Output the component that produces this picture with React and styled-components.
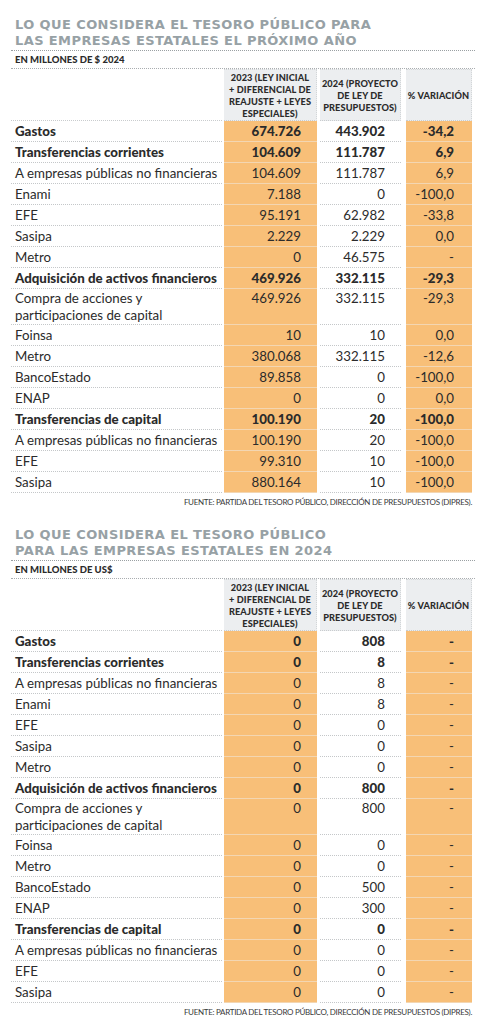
import React from "react";
import styled, { createGlobalStyle } from "styled-components";

const GlobalStyle = createGlobalStyle`
	body {
		margin: 0;
		background: #ffffff;
		font-family: Lato, "Open Sans", sans-serif;
		color: #2b2b2b;
	}
`;

const ORANGE = "#f8bf78";
const HEAD_GRAY = "#eceef0";
const RULE = "#c4c7c9";

const Page = styled.div`
	width: 493px;
	padding-left: 11px;
	box-sizing: border-box;
`;

const Section = styled.section`
	width: 464px;
	padding-top: ${props => props.$top}px;
`;

const Title = styled.h1`
	margin: 0;
	padding: 0 0 1px 4px;
	font-family: "DejaVu Sans", sans-serif;
	font-weight: bold;
	font-size: 13px;
	line-height: 16px;
	letter-spacing: 0.4px;
	color: #97a1a5;
	border-bottom: 1px dotted #9aa0a3;
`;

const Unit = styled.div`
	height: 17px;
	padding-left: 4px;
	font-size: 9.5px;
	font-weight: 900;
	line-height: 18px;
	border-bottom: 1px dotted #a9adb0;
`;

// label | 2023 | 2024 | variation
const Row = styled.div`
	display: grid;
	grid-template-columns: 211px 93px 82px 69px;
	column-gap: 2px;
	& > :nth-child(3) {
		margin-left: 1px;
	}
	& > :nth-child(4) {
		margin-left: 3px;
	}
`;

const HeadCell = styled.div`
	height: 52px;
	display: flex;
	align-items: center;
	justify-content: center;
	text-align: center;
	background: ${props => (props.$empty ? "transparent" : HEAD_GRAY)};
	border-top: ${props => (props.$empty ? "none" : "1px dotted #d3d6d8")};
	border-right: ${props => (props.$empty ? "none" : "1px dotted #d3d6d8")};
	border-bottom: 1px dotted #c9ccce;
	box-sizing: border-box;
	font-size: 9.2px;
	font-weight: 900;
	line-height: 12px;
	letter-spacing: 0.1px;
	white-space: nowrap;
	padding: 2px 0 0;
`;

const Cell = styled.div`
	height: ${props => (props.$double ? 34 : 20)}px;
	border-bottom: 1px ${props => (props.$fill ? "solid" : "dotted")}
		${props => (props.$fill ? "#f3d6b2" : RULE)};
	background: ${props => (props.$fill ? ORANGE : "transparent")};
	font-size: 13.3px;
	line-height: ${props => (props.$double ? 17 : 21)}px;
	padding-top: ${props => (props.$double ? 1 : 0)}px;
	font-weight: ${props => (props.$bold ? 900 : 400)};
	color: #2b2b2b;
	white-space: nowrap;
`;

const Label = styled(Cell)`
	padding-left: 4px;
`;

const Num = styled(Cell)`
	text-align: right;
	padding-right: ${props => props.$pad}px;
`;

const Source = styled.div`
	text-align: right;
	padding: 4px 3px 0 0;
	height: 14px;
	font-size: 8px;
	letter-spacing: -0.3px;
	color: #3a3a3a;
	text-transform: uppercase;
`;

const HEAD = [
	["2023 (LEY INICIAL", "+ DIFERENCIAL DE", "REAJUSTE + LEYES", "ESPECIALES)"],
	["2024 (PROYECTO", "DE LEY DE", "PRESUPUESTOS)"],
	["% VARIACIÓN"],
];

const T1 = [
	["Gastos", "674.726", "443.902", "-34,2", 1],
	["Transferencias corrientes", "104.609", "111.787", "6,9", 1],
	["A empresas públicas no financieras", "104.609", "111.787", "6,9"],
	["Enami", "7.188", "0", "-100,0"],
	["EFE", "95.191", "62.982", "-33,8"],
	["Sasipa", "2.229", "2.229", "0,0"],
	["Metro", "0", "46.575", "-"],
	["Adquisición de activos financieros", "469.926", "332.115", "-29,3", 1],
	[["Compra de acciones y", "participaciones de capital"], "469.926", "332.115", "-29,3", 0, 1],
	["Foinsa", "10", "10", "0,0"],
	["Metro", "380.068", "332.115", "-12,6"],
	["BancoEstado", "89.858", "0", "-100,0"],
	["ENAP", "0", "0", "0,0"],
	["Transferencias de capital", "100.190", "20", "-100,0", 1],
	["A empresas públicas no financieras", "100.190", "20", "-100,0"],
	["EFE", "99.310", "10", "-100,0"],
	["Sasipa", "880.164", "10", "-100,0"],
];

const T2 = [
	["Gastos", "0", "808", "-", 1],
	["Transferencias corrientes", "0", "8", "-", 1],
	["A empresas públicas no financieras", "0", "8", "-"],
	["Enami", "0", "8", "-"],
	["EFE", "0", "0", "-"],
	["Sasipa", "0", "0", "-"],
	["Metro", "0", "0", "-"],
	["Adquisición de activos financieros", "0", "800", "-", 1],
	[["Compra de acciones y", "participaciones de capital"], "0", "800", "-", 0, 1],
	["Foinsa", "0", "0", "-"],
	["Metro", "0", "0", "-"],
	["BancoEstado", "0", "500", "-"],
	["ENAP", "0", "300", "-"],
	["Transferencias de capital", "0", "0", "-", 1],
	["A empresas públicas no financieras", "0", "0", "-"],
	["EFE", "0", "0", "-"],
	["Sasipa", "0", "0", "-"],
];

const Lines = ({ items }) =>
	items.map((line, i) => (
		<React.Fragment key={i}>
			{i > 0 && <br />}
			{line}
		</React.Fragment>
	));

const Budget = ({ title, unit, rows, top }) => (
	<Section $top={top}>
		<Title>
			<Lines items={title} />
		</Title>
		<Unit>{unit}</Unit>
		<Row>
			<HeadCell $empty />
			{HEAD.map(h => (
				<HeadCell key={h[0]}>
					<div>
						<Lines items={h} />
					</div>
				</HeadCell>
			))}
		</Row>
		{rows.map(([label, a, b, c, bold, double], i) => (
			<Row key={i}>
				<Label $bold={bold} $double={double}>
					{Array.isArray(label) ? <Lines items={label} /> : label}
				</Label>
				<Num $fill $bold={bold} $double={double} $pad={16}>
					{a}
				</Num>
				<Num $bold={bold} $double={double} $pad={16}>
					{b}
				</Num>
				<Num $fill $bold={bold} $double={double} $pad={18}>
					{c}
				</Num>
			</Row>
		))}
		<Source>
			Fuente: Partida del Tesoro Público, Dirección de Presupuestos (DIPRES).
		</Source>
	</Section>
);

export default function App() {
	return (
		<Page>
			<GlobalStyle />
			<Budget
				top={17}
				title={["LO QUE CONSIDERA EL TESORO PÚBLICO PARA", "LAS EMPRESAS ESTATALES EL PRÓXIMO AÑO"]}
				unit="EN MILLONES DE $ 2024"
				rows={T1}
			/>
			<Budget
				top={16}
				title={["LO QUE CONSIDERA EL TESORO PÚBLICO", "PARA LAS EMPRESAS ESTATALES EN 2024"]}
				unit="EN MILLONES DE US$"
				rows={T2}
			/>
		</Page>
	);
}
